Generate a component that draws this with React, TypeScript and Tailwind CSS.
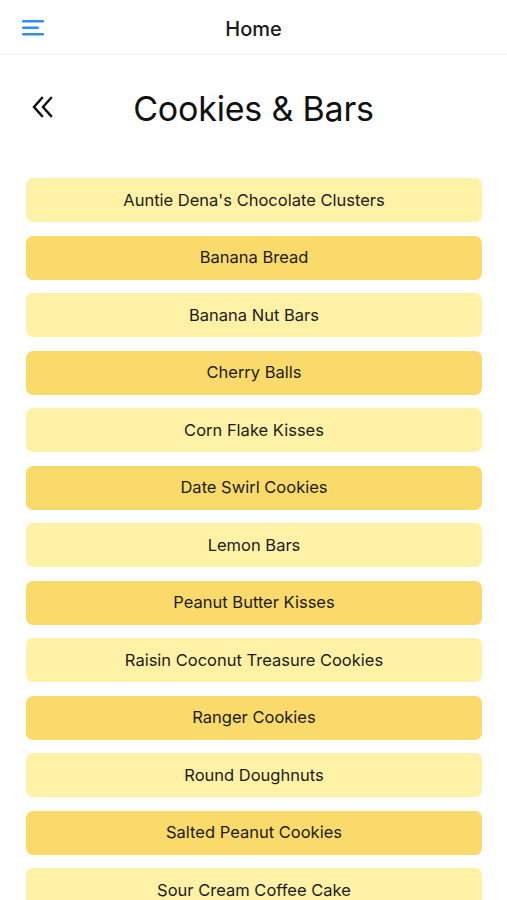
import React from "react";

const items = [
  "Auntie Dena's Chocolate Clusters",
  "Banana Bread",
  "Banana Nut Bars",
  "Cherry Balls",
  "Corn Flake Kisses",
  "Date Swirl Cookies",
  "Lemon Bars",
  "Peanut Butter Kisses",
  "Raisin Coconut Treasure Cookies",
  "Ranger Cookies",
  "Round Doughnuts",
  "Salted Peanut Cookies",
  "Sour Cream Coffee Cake",
  "Sugar Cookies",
];

export default function App() {
  return (
    <div
      className="w-[507px] h-[900px] overflow-hidden bg-white flex flex-col"
      style={{ fontFamily: "Inter, 'Noto Sans', sans-serif" }}
    >
      <header className="h-[55px] shrink-0 flex items-center relative border-b border-[#f0f0f0]">
        <button className="absolute left-[22px] top-[19px] w-[22px] h-[18px]" aria-label="menu">
          <svg width="22" height="18" viewBox="0 0 22 18">
            <rect x="0" y="1" width="22" height="2.5" rx="1.25" fill="#2f8df2" />
            <rect x="0" y="7.5" width="17" height="2.5" rx="1.25" fill="#2f8df2" />
            <rect x="0" y="14" width="22" height="2.5" rx="1.25" fill="#2f8df2" />
          </svg>
        </button>
        <div className="w-full text-center text-[20px] font-medium text-[#1a1a1a] pt-[3px]">Home</div>
      </header>
      <div className="relative h-[106px] shrink-0 flex items-center justify-center">
        <button className="absolute left-[32px] top-[41px] w-[22px] h-[22px]" aria-label="back">
          <svg width="22" height="22" viewBox="0 0 22 22" fill="none" stroke="#111" strokeWidth="2.4" strokeLinecap="square">
            <polyline points="10,2 2,11 10,20" />
            <polyline points="19,2 11,11 19,20" />
          </svg>
        </button>
        <h1 className="text-[34px] text-[#111] font-normal tracking-[-0.2px] mt-[1px]">Cookies &amp; Bars</h1>
      </div>
      <div className="flex flex-col gap-[13.5px] pl-[26px] pr-[25px] pt-[17px]">
        {items.map((t, i) => (
          <div
            key={t}
            className={`h-[44px] shrink-0 rounded-[7px] flex items-center justify-center text-[16.5px] text-[#1c1c1c] ${
              i % 2 === 0 ? "bg-[#fff1a6]" : "bg-[#f9da6b]"
            }`}
          >
            {t}
          </div>
        ))}
      </div>
    </div>
  );
}
